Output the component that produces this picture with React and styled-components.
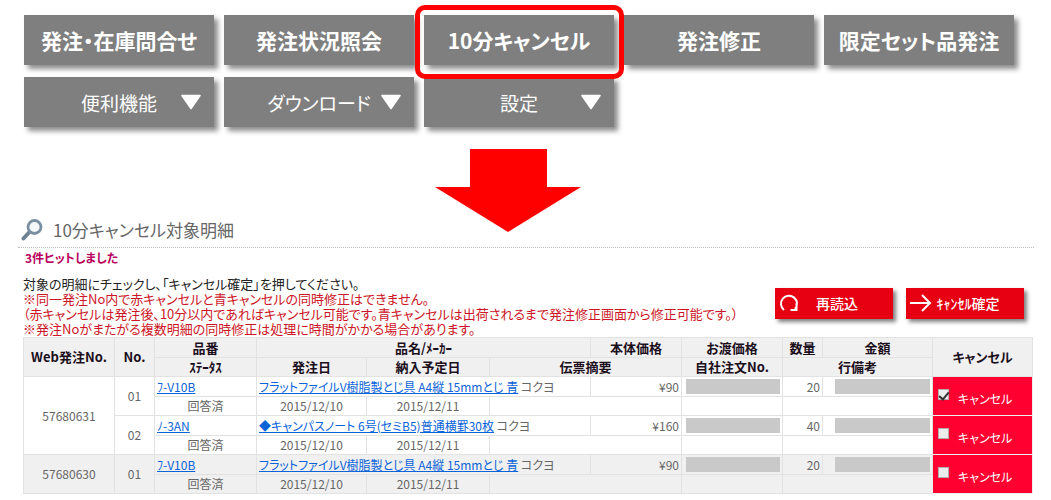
import React, { useState } from "react";
import styled, { createGlobalStyle } from "styled-components";

const navItems = [
  { label: "発注・在庫問合せ" },
  { label: "発注状況照会" },
  { label: "10分キャンセル", active: true },
  { label: "発注修正" },
  { label: "限定セット品発注" },
  { label: "便利機能", menu: true },
  { label: "ダウンロード", menu: true },
  { label: "設定", menu: true },
];

const columnWidths = [91, 40, 102, 110, 123, 101, 91, 101, 40, 110, 100];

const orders = [
  {
    id: "57680631",
    lines: [
      {
        no: "01",
        code: "ﾌ-V10B",
        name: "フラットファイルV樹脂製とじ具 A4縦 15mmとじ 青",
        price: "¥90",
        qty: 20,
      },
      {
        no: "02",
        code: "ﾉ-3AN",
        name: "◆キャンパスノート 6号(セミB5)普通横罫30枚",
        price: "¥160",
        qty: 40,
      },
    ],
  },
  {
    id: "57680630",
    shaded: true,
    lines: [
      {
        no: "01",
        code: "ﾌ-V10B",
        name: "フラットファイルV樹脂製とじ具 A4縦 15mmとじ 青",
        price: "¥90",
        qty: 20,
      },
    ],
  },
];

const OrderLine = ({ order, line, first }) => {
  const [checked, setChecked] = useState(
    order.id === "57680631" && line.no === "01"
  );
  const checkId = `cancel-${order.id}-${line.no}`;

  return (
    <>
      <TopRow $shaded={order.shaded}>
        {first && <Td rowSpan={order.lines.length * 2}>{order.id}</Td>}
        <Td rowSpan={2}>{line.no}</Td>
        <Td $align="left">
          <ItemLink href="#item">{line.code}</ItemLink>
        </Td>
        <Td $align="left" colSpan={3}>
          <ItemLink href="#item">{line.name}</ItemLink> コクヨ
        </Td>
        <Td $align="right">{line.price}</Td>
        <Td>
          <Masked />
        </Td>
        <Td $align="right">{line.qty}</Td>
        <Td>
          <Masked $indent />
        </Td>
        <CancelCell rowSpan={2}>
          <CancelLabel htmlFor={checkId}>
            <CheckBox
              id={checkId}
              type="checkbox"
              checked={checked}
              onChange={(e) => setChecked(e.target.checked)}
            />
            <CancelText>キャンセル</CancelText>
          </CancelLabel>
        </CancelCell>
      </TopRow>
      <BottomRow $shaded={order.shaded}>
        <Td>回答済</Td>
        <Td>2015/12/10</Td>
        <Td>2015/12/11</Td>
        <Td colSpan={2} />
        <Td />
        <Td colSpan={2} />
      </BottomRow>
    </>
  );
};

const App = () => {
  return (
    <Page>
      <GlobalStyle />
      <Nav>
        {navItems.map((item) => (
          <NavButton key={item.label} $menu={item.menu} $active={item.active}>
            <NavLabel>{item.label}</NavLabel>
            {item.menu && (
              <Caret viewBox="0 0 22 16">
                <path
                  d="M2 1.500H20L11 14.500Z"
                  fill="#fff"
                  stroke="#fff"
                  strokeWidth="1.600"
                  strokeLinejoin="round"
                />
              </Caret>
            )}
          </NavButton>
        ))}
      </Nav>

      <ArrowRow>
        <svg width="146" height="83" viewBox="0 0 146 83">
          <path d="M35 0H112V38H146L73 83L0 38H35Z" fill="#ff0000" />
        </svg>
      </ArrowRow>

      <Main>
        <Title>
          <svg width="22" height="22" viewBox="0 0 22 22">
            <path
              d="M8 13.500L2.500 19.500"
              stroke="#6f8294"
              strokeWidth="4"
              strokeLinecap="round"
            />
            <circle
              cx="13.500"
              cy="8"
              r="6.500"
              fill="#f4f8fb"
              stroke="#7b8fa2"
              strokeWidth="2.800"
            />
          </svg>
          10分キャンセル対象明細
        </Title>
        <Content>
          <HitCount>3件ヒットしました</HitCount>
          <Guide>
            <GuideText>
              対象の明細にチェックし、「キャンセル確定」を押してください。
              <Warning>
                ※同一発注No内で赤キャンセルと青キャンセルの同時修正はできません。
              </Warning>
              <Warning>
                （赤キャンセルは発注後、10分以内であればキャンセル可能です。青キャンセルは出荷されるまで発注修正画面から修正可能です。）
              </Warning>
              <Warning>
                ※発注Noがまたがる複数明細の同時修正は処理に時間がかかる場合があります。
              </Warning>
            </GuideText>
            <Actions>
              <ActionButton>
                <svg width="22" height="20" viewBox="0 0 22 20">
                  <path
                    d="M5 17A8 8 0 1 1 16 16M11.500 17H18.500M17.500 10.500V17.500"
                    fill="none"
                    stroke="#fff"
                    strokeWidth="2"
                  />
                </svg>
                <span>再読込</span>
              </ActionButton>
              <ActionButton>
                <svg width="22" height="20" viewBox="0 0 22 20">
                  <path
                    d="M0 10H20M12 2L20 10L12 18"
                    fill="none"
                    stroke="#fff"
                    strokeWidth="2"
                  />
                </svg>
                <span>ｷｬﾝｾﾙ確定</span>
              </ActionButton>
            </Actions>
          </Guide>

          <Table>
            <colgroup>
              {columnWidths.map((width, i) => (
                <col key={i} width={width} />
              ))}
            </colgroup>
            <thead>
              <TopRow $shaded>
                <Th rowSpan={2}>Web発注No.</Th>
                <Th rowSpan={2}>No.</Th>
                <Th>品番</Th>
                <Th colSpan={3}>品名/ﾒｰｶｰ</Th>
                <Th>本体価格</Th>
                <Th>お渡価格</Th>
                <Th>数量</Th>
                <Th>金額</Th>
                <Th rowSpan={2}>キャンセル</Th>
              </TopRow>
              <BottomRow $shaded>
                <Th>ｽﾃｰﾀｽ</Th>
                <Th>発注日</Th>
                <Th>納入予定日</Th>
                <Th colSpan={2}>伝票摘要</Th>
                <Th>自社注文No.</Th>
                <Th colSpan={2}>行備考</Th>
              </BottomRow>
            </thead>
            <tbody>
              {orders.map((order) =>
                order.lines.map((line, i) => (
                  <OrderLine
                    key={order.id + line.no}
                    order={order}
                    line={line}
                    first={i === 0}
                  />
                ))
              )}
            </tbody>
          </Table>
        </Content>
      </Main>
    </Page>
  );
};

export default App;

const GlobalStyle = createGlobalStyle`
  body {
    margin: 0;
    background: #fff;
  }

  * {
    box-sizing: border-box;
  }
`;

const Page = styled.div`
  font-family: "Noto Sans CJK JP", sans-serif;
  font-feature-settings: "palt";
  font-size: 13px;
  color: #666;
  overflow: hidden;
`;

const Nav = styled.nav`
  display: grid;
  grid-template-columns: repeat(5, 1fr);
  gap: 12px 10px;
  padding: 15px 37px 0 24px;
`;

const NavButton = styled.button`
  position: relative;
  display: grid;
  grid-template-columns: 1fr auto 1fr;
  align-items: center;
  height: 50px;
  padding: 0 12px;
  border: 0;
  background: #7f7f7f;
  box-shadow: 4px 4px 5px rgba(0, 0, 0, 0.45);
  color: #fff;
  font: inherit;
  font-size: ${(props) => (props.$menu ? "19px" : "21px")};
  font-weight: ${(props) => (props.$menu ? 400 : 700)};
  white-space: nowrap;
  cursor: pointer;

  &::after {
    content: "";
    display: ${(props) => (props.$active ? "block" : "none")};
    position: absolute;
    z-index: 1;
    inset: -10px -10px -14px -9px;
    border: 5px solid #ff0000;
    border-radius: 10px;
  }
`;

const NavLabel = styled.span`
  grid-column: 2;
`;

const Caret = styled.svg`
  justify-self: end;
  width: 22px;
  height: 16px;
`;

const ArrowRow = styled.div`
  display: flex;
  justify-content: center;
  padding: 22px 35px 0 0;
`;

const Main = styled.main`
  margin-top: -16px;
  padding: 0 17px 0 18px;
`;

const Title = styled.h1`
  display: flex;
  align-items: center;
  gap: 10px;
  height: 32px;
  margin: 0;
  padding: 0 3px 4px;
  border-bottom: 1px dotted #bbb;
  font-size: 17px;
  font-weight: 400;
`;

const Content = styled.div`
  padding: 0 3px 0 5px;
`;

const HitCount = styled.p`
  margin: 0;
  padding-left: 2px;
  line-height: 20px;
  font-size: 12px;
  font-weight: 700;
  color: #b8005c;
`;

const Guide = styled.div`
  display: flex;
  align-items: center;
  justify-content: space-between;
  padding: 8px 7px 1px 0;
`;

const GuideText = styled.div`
  line-height: 15px;
  color: #222;
`;

const Warning = styled.div`
  color: #cc1526;
`;

const Actions = styled.div`
  display: flex;
  gap: 13px;
  padding-bottom: 6px;
`;

const ActionButton = styled.button`
  display: grid;
  grid-template-columns: 22px 1fr;
  align-items: center;
  width: 118px;
  height: 31px;
  padding: 0 20px 0 4px;
  border: 0;
  background: #e60012;
  box-shadow: 3px 3px 4px rgba(0, 0, 0, 0.5);
  color: #fff;
  font: inherit;
  font-size: 14px;
  font-weight: 500;
  white-space: nowrap;
  cursor: pointer;
`;

const Table = styled.table`
  width: 100%;
  table-layout: fixed;
  border-collapse: collapse;
  line-height: 16px;
`;

const TopRow = styled.tr`
  height: 20px;
  background: ${(props) => (props.$shaded ? "#f0f0f0" : "#fff")};
`;

const BottomRow = styled(TopRow)`
  height: 19px;
`;

const Td = styled.td`
  padding: 0 2px;
  border: 1px solid #e2e2e2;
  font-size: 12px;
  text-align: ${(props) => props.$align || "center"};
  white-space: nowrap;
`;

const Th = styled.th`
  padding: 0;
  border: 1px solid #e2e2e2;
  color: #1c0f1c;
  font-weight: 700;
  white-space: nowrap;
`;

const ItemLink = styled.a`
  color: #0b63d8;
`;

const Masked = styled.div`
  height: 15px;
  margin-left: ${(props) => (props.$indent ? "10px" : "2px")};
  background: #c9c9c9;
`;

const CancelCell = styled(Td)`
  padding: 0 5px;
  border: 1px solid #eee;
  background: #ff0030;
`;

const CancelLabel = styled.label`
  display: flex;
  align-items: flex-start;
  gap: 9px;
  color: #fff;
  cursor: pointer;
`;

const CancelText = styled.span`
  padding-top: 6px;
`;

const CheckBox = styled.input`
  appearance: none;
  display: grid;
  place-items: center;
  width: 11px;
  height: 11px;
  margin: 4px 0 0;
  border: 1px solid #b9a9ac;
  background: #ececec;

  &:checked::after {
    content: "";
    width: 4px;
    height: 8px;
    border: solid #333;
    border-width: 0 2px 2px 0;
    transform: rotate(40deg);
  }
`;
